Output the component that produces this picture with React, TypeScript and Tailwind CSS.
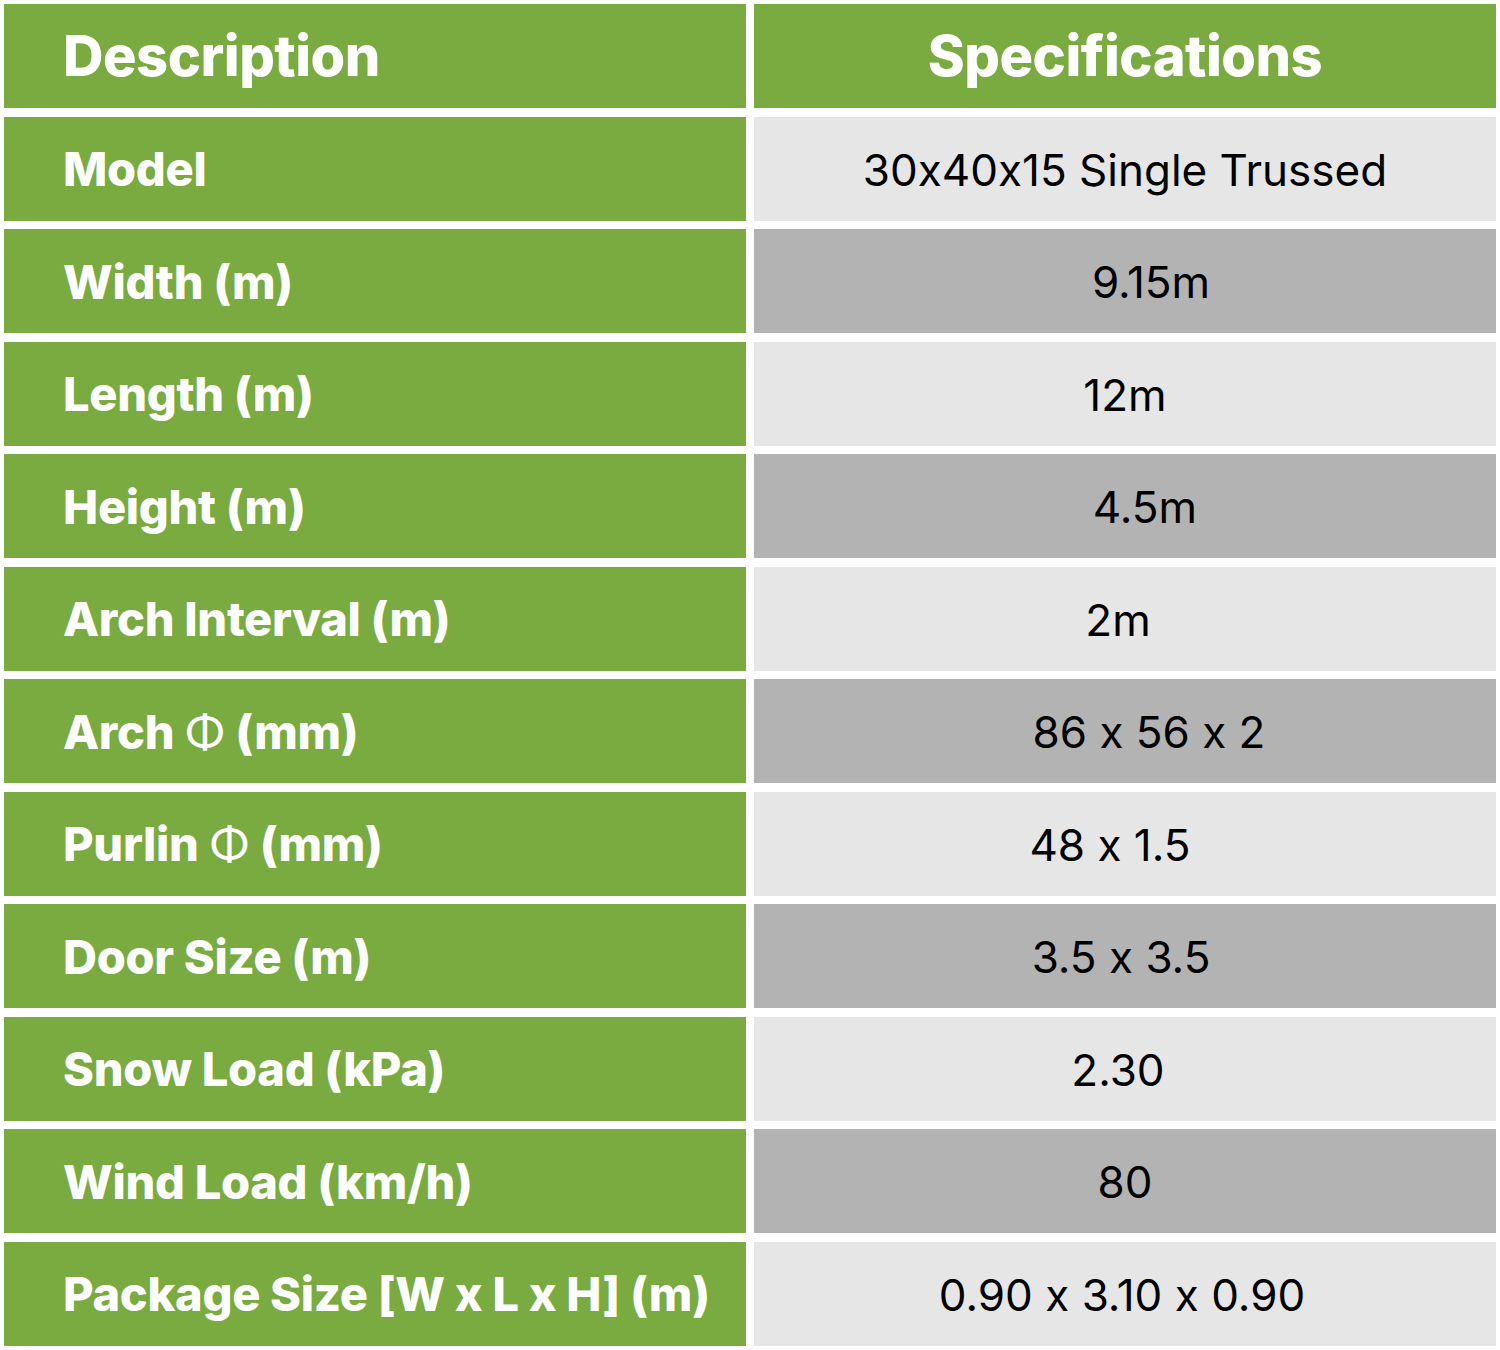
import React from 'react';

const Phi = () => <span className="font-normal">{'\u03A6'}</span>;

const rows = [
  { label: <>Model</>, key: 'model', value: '30x40x15 Single Trussed', dark: false, shift: '' },
  { label: <>Width (m)</>, key: 'width', value: '9.15m', dark: true, shift: 'pl-[52px]' },
  { label: <>Length (m)</>, key: 'length', value: '12m', dark: false, shift: '' },
  { label: <>Height (m)</>, key: 'height', value: '4.5m', dark: true, shift: 'pl-[40px]' },
  { label: <>Arch Interval (m)</>, key: 'interval', value: '2m', dark: false, shift: 'pr-[14px]' },
  { label: <>Arch <Phi /> (mm)</>, key: 'arch', value: '86 x 56 x 2', dark: true, shift: 'pl-[48px]' },
  { label: <>Purlin <Phi /> (mm)</>, key: 'purlin', value: '48 x 1.5', dark: false, shift: 'pr-[30px]' },
  { label: <>Door Size (m)</>, key: 'door', value: '3.5 x 3.5', dark: true, shift: 'pr-[8px]' },
  { label: <>Snow Load (kPa)</>, key: 'snow', value: '2.30', dark: false, shift: 'pr-[14px]' },
  { label: <>Wind Load (km/h)</>, key: 'wind', value: '80', dark: true, shift: '' },
  { label: <>Package Size [W x L x H] (m)</>, key: 'package', value: '0.90 x 3.10 x 0.90', dark: false, shift: 'pr-[6px]' },
];

const App = () => {
  return (
    <div
      className="w-[1500px] h-[1350px] bg-white p-[4px] [font-feature-settings:'calt'_0]"
      style={{ fontFamily: 'Inter, "Noto Sans", sans-serif' }}
    >
      <div className="grid grid-cols-[742px_742px] gap-x-[8px] gap-y-[8.5px]">
        <div className="h-[104px] bg-[#79ab40] flex items-center pl-[59px] text-white font-extrabold text-[56px] tracking-[-0.5px]">
          Description
        </div>
        <div className="h-[104px] bg-[#79ab40] flex items-center justify-center text-white font-extrabold text-[56px] tracking-[-0.5px]">
          Specifications
        </div>
        {rows.map((r) => (
          <React.Fragment key={r.key}>
            <div className="h-[104px] bg-[#79ab40] flex items-center pt-[2px] pl-[59px] text-white font-extrabold text-[47px] tracking-[-0.3px] whitespace-pre">
              {r.label}
            </div>
            <div
              className={`h-[104px] flex items-center justify-center pt-[2px] text-black text-[44px] ${r.dark ? 'bg-[#b3b3b3]' : 'bg-[#e6e6e6]'} ${r.shift}`}
            >
              {r.value}
            </div>
          </React.Fragment>
        ))}
      </div>
    </div>
  );
};

export default App;
